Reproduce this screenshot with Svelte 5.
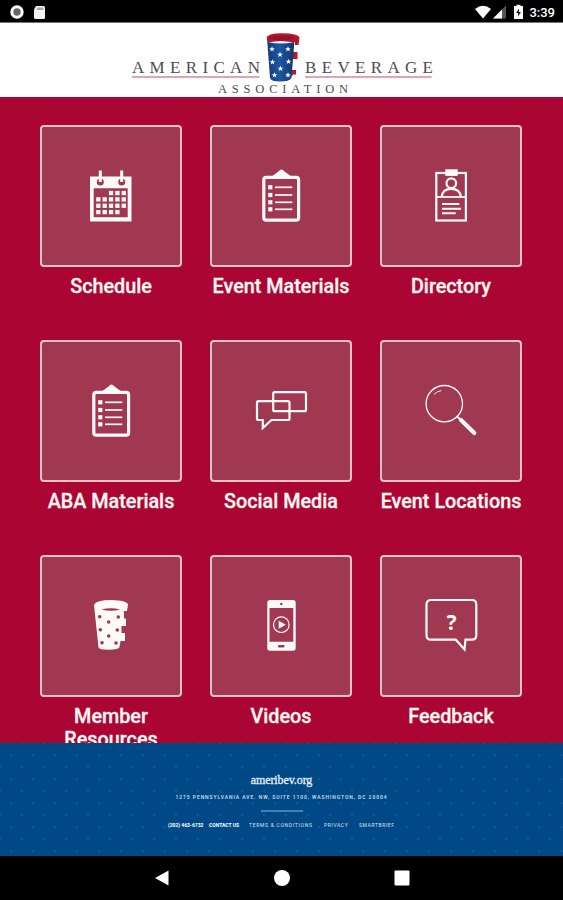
<script lang="ts">
    type Tile = { icon: string; label: string };

    const tiles: Tile[] = [
        { icon: "calendar", label: "Schedule" },
        { icon: "clipboard", label: "Event Materials" },
        { icon: "badge", label: "Directory" },
        { icon: "clipboard", label: "ABA Materials" },
        { icon: "chat", label: "Social Media" },
        { icon: "search", label: "Event Locations" },
        { icon: "cup", label: "Member Resources" },
        { icon: "phone", label: "Videos" },
        { icon: "feedback", label: "Feedback" },
    ];

    // Calendar days as [column, row]
    const days = [
        [2, 0], [3, 0], [4, 0],
        [0, 1], [1, 1], [2, 1], [3, 1], [4, 1],
        [0, 2], [1, 2], [2, 2], [3, 2], [4, 2],
        [0, 3], [1, 3], [2, 3], [3, 3],
    ];

    const listRows = [19.3, 27, 34.3, 41.3];
    const cupDots = [[16.7, 18.7], [35.3, 19], [25.7, 24], [17.3, 31.7], [34.3, 32], [25.7, 38], [19, 44.7], [33, 45]];
    const logoStars = [[152, 25], [168, 25], [160, 30.5], [152.5, 38], [168.5, 37.5], [160.5, 44.5], [154.5, 51], [168, 51]];
</script>

<div class="screen">
    <div class="status-bar">
        <svg class="status-left" width="40" height="16" viewBox="0 0 40 16">
            <circle cx="9" cy="8" r="5.2" fill="#666" stroke="#fff" stroke-width="3" />
            <path d="M29 2h7.500q1.500 0 1.500 1.500v10q0 1.500-1.500 1.500h-8q-1.500 0-1.500-1.500v-8z" transform="translate(-1 0)" fill="#f2f2f2" />
            <path d="M29.500 3.500h6v2.500h-7z" fill="#aaa" />
        </svg>
        <div class="status-right">
            <svg width="52" height="16" viewBox="0 0 52 16">
                <path d="M1 5Q9 -1.500 17 5L9 14.500z" fill="#fff" />
                <path d="M32 1.500v13H19z" fill="#555" />
                <path d="M28 5.500v9h-9z" fill="#fff" />
                <path d="M40 2h2.500V.8h4V2H49v13h-9z" fill="#fff" />
                <path d="M45 4.500l-3 4.500h2v3.500l3-4.500h-2z" fill="#222" />
            </svg>
            <span class="clock">3:39</span>
        </div>
    </div>

    <header class="header">
        <svg width="325" height="74" viewBox="0 0 325 74">
            <defs>
                <linearGradient id="cup-blue" x1="0" x2="1">
                    <stop offset="0" stop-color="#143a76" />
                    <stop offset="0.45" stop-color="#1c57a5" />
                    <stop offset="1" stop-color="#12356c" />
                </linearGradient>
            </defs>
            <g class="logo-text">
                <text x="12" y="49" textLength="128" font-size="17">AMERICAN</text>
                <text x="185" y="49" textLength="128" font-size="17">BEVERAGE</text>
                <text x="98" y="69" textLength="130" font-size="12.500">ASSOCIATION</text>
            </g>
            <path d="M12 53H139.500M185 53H311.500" stroke="#d9879a" stroke-width="1.500" />
            <path d="M170 28h7.500v7H170zM169 46h7v4.500h-3v1h-4z" fill="#b9152c" />
            <path d="M147 14L150 54Q151 57.500 160 57.500Q169.500 57.500 171.500 54L174.500 16z" fill="url(#cup-blue)" />
            <path d="M146.700 14Q147 9.500 162 9.300Q178 9.500 179.500 13.500L178.500 21H175v-3Q161 16 148 18z" fill="#b9152c" />
            <ellipse cx="162" cy="14" rx="12" ry="2.500" fill="#991327" />
            <path d="M148.500 18.500Q161 15.500 173.500 18.500Q161 20.500 148.500 18.500z" fill="#f6eef0" />
            {#each logoStars as [x, y]}
                <path
                    d="M0-2.800L.8-.8 2.800-.8 1.200.5 1.800 2.500 0 1.300-1.800 2.500-1.200.5-2.800-.8-.8-.8z"
                    transform="translate({x} {y})"
                    fill="#fff"
                />
            {/each}
        </svg>
    </header>

    <main class="grid">
        {#each tiles as tile}
            <div class="item">
                <div class="tile">
                    <svg class="icon" width="56" height="56" viewBox="0 0 56 56">
                        {#if tile.icon === "calendar"}
                            <path class="solid" fill-rule="evenodd" d="M7 8.500H48.500V53.500H7zM10.700 20.300V49.300H44.700V20.300z" />
                            <circle class="hole" cx="17.300" cy="14" r="3.500" />
                            <circle class="hole" cx="38.700" cy="14" r="3.500" />
                            <path d="M17.300 2.500V14M38.700 2.500V14" stroke-width="3" />
                            {#each days as [col, row]}
                                <rect class="solid" x={13.200 + col * 6.350} y={22.900 + row * 6.350} width="4.300" height="4.300" />
                            {/each}
                        {:else if tile.icon === "clipboard"}
                            <rect x="10.800" y="9.300" width="34.800" height="42.900" rx="2.500" stroke-width="3.200" />
                            <path class="solid" d="M18 10.500L20 7.500L25.500 3.500Q28.500 -0.500 31.500 3.500L37 7.500L39 10.500z" />
                            {#each listRows as y}
                                <rect class="solid" x="15.200" y={y - 2.100} width="4.200" height="4.200" />
                                <path d="M22 {y}H39.300" stroke-width="1.700" />
                            {/each}
                        {:else if tile.icon === "badge"}
                            <rect x="13.300" y="5" width="29.600" height="47.500" stroke-width="2.200" />
                            <rect class="solid" x="22.300" y="1.300" width="12.400" height="6.600" />
                            <path d="M13 29H43" stroke-width="1.800" />
                            <circle cx="28.300" cy="15.200" r="4.800" stroke-width="2.200" />
                            <path d="M18.500 29Q19.500 20.800 28.300 20.800T38 29" stroke-width="2.200" />
                            <path d="M19 36H36.300M19 40.700H38M19 45.300H32.700" stroke-width="2" />
                        {:else if tile.icon === "chat"}
                            <rect x="20.200" y="9.200" width="32.800" height="19" rx="1.500" stroke-width="2.200" />
                            <path
                                d="M5.500 18.200H35Q36.500 18.200 36.500 19.700V35.500Q36.500 37 35 37H18.500L9.800 45V37H5.500Q4 37 4 35.500V19.700Q4 18.200 5.500 18.200z"
                                stroke-width="2.200"
                            />
                        {:else if tile.icon === "search"}
                            <circle cx="21.300" cy="20.700" r="18.200" stroke-width="1.300" />
                            <path d="M11 11.500Q14 8 18.500 7.500" stroke-width="0.900" />
                            <path d="M33.500 33L39 38" stroke-width="2" />
                            <path d="M38 37L51.300 50" stroke-width="4.200" stroke-linecap="round" />
                        {:else if tile.icon === "cup"}
                            <path
                                class="solid"
                                d="M11 7Q13 2 28 2Q44 2.300 45 6.500L44 13H41V20.500H43V28H38.500V35H42V43H37.500L36.500 49Q35.500 51.700 26 51.700T15.500 49.500z"
                            />
                            <path class="hole" d="M18.500 11.500Q28 9 37 11.500Q28 14 18.500 11.500z" />
                            {#each cupDots as [x, y]}
                                <circle class="hole" cx={x} cy={y} r="1.800" />
                            {/each}
                        {:else if tile.icon === "phone"}
                            <path
                                class="solid"
                                fill-rule="evenodd"
                                d="M17 2H40Q42.700 2 42.700 4.700V50Q42.700 52.700 40 52.700H17Q14.300 52.700 14.300 50V4.700Q14.300 2 17 2zM16.500 10V43.700H40.300V10z"
                            />
                            <circle class="hole" cx="28.300" cy="6" r="1.200" />
                            <rect class="hole" x="25" y="47" width="6.500" height="2.400" rx="1" />
                            <circle cx="28.300" cy="26.700" r="7.800" stroke-width="1.200" />
                            <path class="solid" d="M25.700 22.700L32.700 26.700 25.700 30.700z" />
                        {:else}
                            <path
                                d="M8 2H49Q53.300 2 53.300 6.500V37Q53.300 41.700 49 41.700H42.500L41.500 51.500L32.800 41.700H8Q3.500 41.700 3.500 37V6.500Q3.500 2 8 2z"
                                stroke-width="2.200"
                            />
                            <text x="28.500" y="31.500">?</text>
                        {/if}
                    </svg>
                </div>
                <span class="label">{tile.label}</span>
            </div>
        {/each}
    </main>

    <footer class="footer">
        <div class="site">ameribev.org</div>
        <div class="address">1275 PENNSYLVANIA AVE. NW, SUITE 1100, WASHINGTON, DC 20004</div>
        <div class="divider"></div>
        <div class="links">
            <b class="tel">(202) 463-6732</b>
            <b class="contact">CONTACT US</b>
            <span class="terms">TERMS &amp; CONDITIONS</span>
            <span class="privacy">PRIVACY</span>
            <span class="brief">SMARTBRIEF</span>
        </div>
    </footer>

    <nav class="nav-bar">
        <svg width="18" height="18" viewBox="0 0 18 18"><path d="M15.500 1.500V16.500L2 9z" /></svg>
        <svg width="18" height="18" viewBox="0 0 18 18"><circle cx="9" cy="9" r="8" /></svg>
        <svg width="18" height="18" viewBox="0 0 18 18"><rect x="1.500" y="1.500" width="15" height="15" rx="1" /></svg>
    </nav>
</div>

<style>
    :global(body) {
        margin: 0;
        background: #000;
    }

    .screen {
        display: flex;
        flex-direction: column;
        width: 563px;
        height: 900px;
        overflow: hidden;
        font-family: Roboto, "Liberation Sans", sans-serif;
    }

    .status-bar {
        display: flex;
        justify-content: space-between;
        flex: none;
        box-sizing: border-box;
        height: 23px;
        padding: 4px 8px 0 8px;
        background: #000;
        border-bottom: 1px solid #777;
    }

    .status-right {
        display: flex;
        gap: 3px;
    }

    .clock {
        color: #fff;
        font-size: 13px;
        font-weight: 500;
        line-height: 17px;
    }

    .header {
        display: flex;
        flex: none;
        box-sizing: border-box;
        height: 74px;
        padding: 1px 0 0 120px;
        background: #fff;
    }

    .logo-text {
        font-family: "Liberation Serif", serif;
        fill: #4c4c50;
    }

    .grid {
        display: grid;
        grid-template-columns: repeat(3, 142px);
        grid-auto-rows: 215px;
        column-gap: 28px;
        flex: none;
        box-sizing: border-box;
        height: 646px;
        padding: 28px 0 0 40px;
        overflow: hidden;
        background: #ab0534;
    }

    .item {
        display: flex;
        flex-direction: column;
        align-items: center;
    }

    .tile {
        display: flex;
        align-items: center;
        justify-content: center;
        box-sizing: border-box;
        width: 142px;
        height: 142px;
        background: #9f3850;
        border: 2px solid #f0c4c4;
        border-radius: 4px;
    }

    .icon {
        fill: none;
        stroke: #fffaf8;
    }

    .icon .solid {
        fill: #fffaf8;
        stroke: none;
    }

    .icon .hole {
        fill: #9f3850;
        stroke: none;
    }

    .icon text {
        fill: #fffaf8;
        stroke: none;
        font-family: "Noto Sans", sans-serif;
        font-size: 21px;
        font-weight: 700;
        text-anchor: middle;
    }

    .label {
        width: 146px;
        margin: 8px -2px 0;
        color: #fff6f2;
        font-size: 19.8px;
        font-weight: 500;
        line-height: 23px;
        text-align: center;
        -webkit-text-stroke: 0.3px #fff6f2;
    }

    .footer {
        display: flex;
        flex-direction: column;
        align-items: center;
        flex: none;
        box-sizing: border-box;
        height: 113px;
        padding-top: 30px;
        color: #d5e2f0;
        background-color: #004987;
        background-image: radial-gradient(circle, #125792 0.8px, transparent 1.2px),
            radial-gradient(circle, #125792 0.8px, transparent 1.2px);
        background-size: 22px 24px;
        background-position: 0 0, 11px 12px;
    }

    .site {
        color: #e6eef7;
        font-family: "Liberation Serif", serif;
        font-size: 12px;
        line-height: 15px;
        letter-spacing: -0.1px;
        -webkit-text-stroke: 0.3px #e6eef7;
    }

    .address {
        margin-top: 6px;
        font-size: 5px;
        font-weight: 500;
        line-height: 6px;
        letter-spacing: 0.93px;
        white-space: nowrap;
    }

    .divider {
        width: 42px;
        height: 2px;
        margin-top: 10px;
        background: #4d7fae;
    }

    .links {
        display: flex;
        box-sizing: border-box;
        width: 227px;
        margin-top: 10px;
        font-size: 5px;
        line-height: 7px;
        white-space: nowrap;
    }

    .links b {
        color: #fff;
    }

    .tel {
        width: 41px;
    }

    .contact {
        width: 40px;
    }

    .terms {
        width: 75px;
        letter-spacing: 0.7px;
    }

    .privacy {
        width: 35px;
        letter-spacing: 0.6px;
    }

    .brief {
        letter-spacing: 0.6px;
    }

    .nav-bar {
        display: flex;
        align-items: center;
        justify-content: center;
        gap: 102px;
        flex: none;
        height: 44px;
        background: #000;
        fill: #fff;
    }
</style>
